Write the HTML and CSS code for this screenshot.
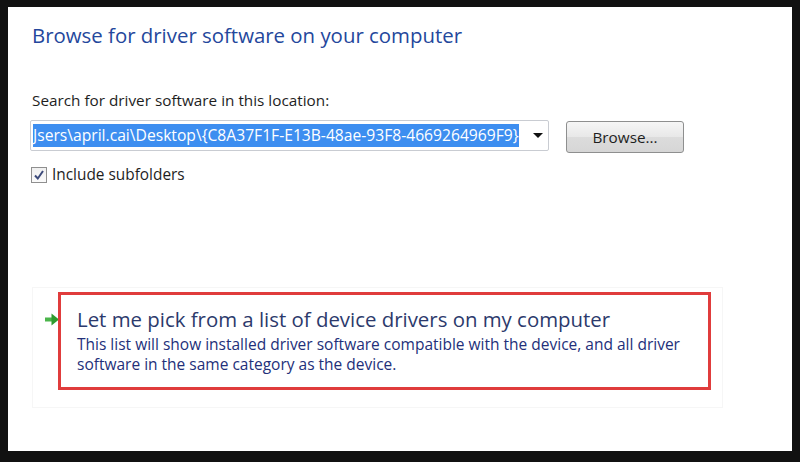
FILE: index.html
```html
<!DOCTYPE html>
<html>
<head lang="en">
    <meta charset="UTF-8">
    <title>Browse for driver software</title>
    <link rel="stylesheet" href="styles.css">
</head>
<body>
<div class="frame">
    <div class="panel">
        <h1 class="title">Browse for driver software on your computer</h1>

        <p class="label">Search for driver software in this location:</p>
        <div class="path-row">
            <div class="combo">
                <span class="path-text">Jsers\april.cai\Desktop\{C8A37F1F-E13B-48ae-93F8-4669264969F9}</span>
                <span class="caret"></span>
            </div>
            <button class="btn">Browse...</button>
        </div>

        <label class="check">
            <span class="box">
                <svg width="12" height="12" viewBox="0 0 12 12">
                    <path d="M2 6.5 L4.8 9.5 L10 2" fill="none" stroke="#3c4a7a" stroke-width="2"/>
                </svg>
            </span>
            Include subfolders
        </label>

        <div class="option-wrap">
            <svg class="arrow" width="16" height="13" viewBox="0 0 16 13">
                <path d="M1 6.5 H9" stroke="#4bb54b" stroke-width="4"/>
                <path d="M7.5 0.5 L15 6.5 L7.5 12.5 Z" fill="#2e9b2e"/>
            </svg>
            <div class="option">
                <div class="option-title">Let me pick from a list of device drivers on my computer</div>
                <div class="option-desc">This list will show installed driver software compatible with the device, and all driver software in the same category as the device.</div>
            </div>
        </div>
    </div>
</div>
</body>
</html>
```

FILE: styles.css
```css
* {
    margin: 0;
    padding: 0;
    box-sizing: border-box;
}

body {
    background: #111;
    font-family: "Open Sans", "Noto Sans", sans-serif;
}

.frame {
    height: 462px;
    padding: 7px 8px 11px 8px;
}

.panel {
    height: 100%;
    background: #fff;
    padding: 14px 0 0 24px;
}

.title {
    font-size: 20.4px;
    font-weight: normal;
    line-height: 28px;
    color: #24479c;
}

.label {
    margin-top: 41px;
    font-size: 15.3px;
    line-height: 20px;
    color: #1e1e1e;
}

.path-row {
    display: flex;
    align-items: flex-start;
    margin-top: 10px;
    margin-left: -2px;
}

.combo {
    width: 519px;
    height: 31px;
    border: 1px solid #c9ccd2;
    border-radius: 2px;
    display: flex;
    align-items: center;
    padding: 0 5px 0 2px;
}

.path-text {
    background: #3d8ef0;
    color: #fff;
    font-size: 15.65px;
    line-height: 23px;
    white-space: nowrap;
}

.caret {
    margin-left: auto;
    width: 0;
    height: 0;
    border-left: 5px solid transparent;
    border-right: 5px solid transparent;
    border-top: 5px solid #111;
}

.btn {
    margin-left: 17px;
    margin-top: 1px;
    width: 118px;
    height: 32px;
    border: 1px solid #8e8f8f;
    border-radius: 3px;
    background: linear-gradient(#f6f6f6, #e8e8e8 50%, #dcdcdc 51%, #d6d6d6);
    font-family: inherit;
    font-size: 15.3px;
    color: #1e1e1e;
}

.check {
    display: flex;
    align-items: center;
    margin-top: 13px;
    margin-left: -1px;
    font-size: 15.4px;
    color: #1e1e1e;
    line-height: 18px;
}

.box {
    width: 16px;
    height: 16px;
    border: 1px solid #8f8f8f;
    background: linear-gradient(#f0f0f0, #fafafa);
    display: flex;
    align-items: center;
    justify-content: center;
    margin-right: 5px;
}

.option-wrap {
    display: flex;
    align-items: flex-start;
    margin-top: 103px;
    width: 691px;
    padding: 4px 9px 17px 11px;
    border: 1px solid #f6f6f6;
}

.arrow {
    margin-top: 21px;
    margin-right: -2px;
    flex: none;
}

.option {
    width: 653px;
    border: 3px solid #e03c3c;
    padding: 12px 16px 13px 16px;
}

.option-title {
    font-size: 20.4px;
    line-height: 24px;
    color: #2c3a6c;
}

.option-desc {
    margin-top: 3px;
    font-size: 15.5px;
    line-height: 20px;
    color: #23307a;
}
```
